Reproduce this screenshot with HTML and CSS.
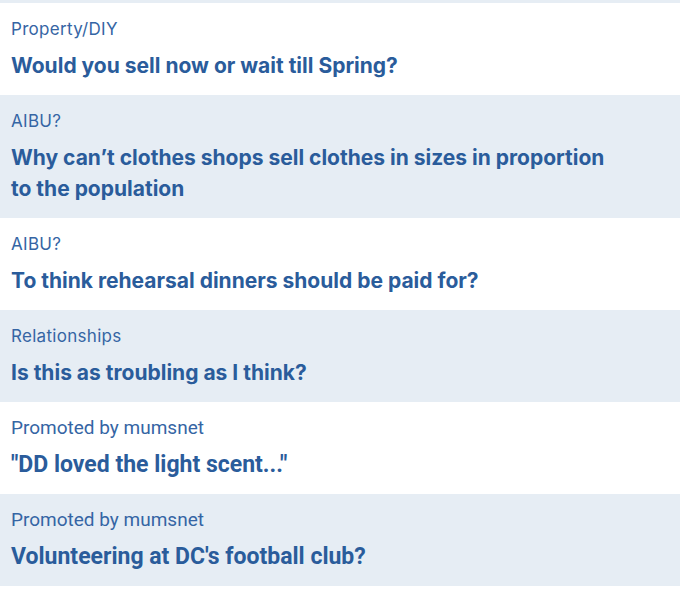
FILE: index.html
```html
<!DOCTYPE html>
<html lang="en">
<head>
    <meta charset="UTF-8">
    <meta name="viewport" content="width=device-width, initial-scale=1.0">
    <title>Threads</title>
    <link rel="stylesheet" href="styles.css">
</head>
<body>
    <div class="top-strip"></div>
    <ul class="thread-list">
        <li class="thread">
            <span class="topic">Property/DIY</span>
            <a class="title" href="#">Would you sell now or wait till Spring?</a>
        </li>
        <li class="thread alt">
            <span class="topic">AIBU?</span>
            <a class="title" href="#">Why can’t clothes shops sell clothes in sizes in proportion to the population</a>
        </li>
        <li class="thread">
            <span class="topic">AIBU?</span>
            <a class="title" href="#">To think rehearsal dinners should be paid for?</a>
        </li>
        <li class="thread alt">
            <span class="topic">Relationships</span>
            <a class="title" href="#">Is this as troubling as I think?</a>
        </li>
        <!-- sponsored items use the app's system font -->
        <li class="thread promoted">
            <span class="topic">Promoted by mumsnet</span>
            <a class="title" href="#">"DD loved the light scent..."</a>
        </li>
        <li class="thread alt promoted">
            <span class="topic">Promoted by mumsnet</span>
            <a class="title" href="#">Volunteering at DC's football club?</a>
        </li>
    </ul>
</body>
</html>
```

FILE: styles.css
```css
body {
    margin: 0;
    background-color: #ffffff;
    font-family: Inter, "Noto Sans", sans-serif;
    color: #2c5e9e;
}
.top-strip {
    height: 3px;
    background-color: #e6edf4;
}
.thread-list {
    list-style: none;
    margin: 0;
    padding: 0;
}
.thread {
    display: flex;
    flex-direction: column;
    align-items: flex-start;
    gap: 10px;
    padding: 15px 11px 14px;
}
.thread.alt {
    background-color: #e6edf4;
}
.topic {
    font-size: 17px;
    line-height: 22px;
    letter-spacing: 0.3px;
    color: #3565a4;
}
.title {
    max-width: 605px;
    font-size: 21px;
    line-height: 31px;
    font-weight: 700;
    color: #2a5c9b;
    text-decoration: none;
}
.promoted .topic {
    font-family: Roboto, "Liberation Sans", sans-serif;
    font-size: 19px;
    letter-spacing: 0;
}
.promoted .title {
    font-family: Roboto, "Liberation Sans", sans-serif;
    font-size: 23px;
}
```
